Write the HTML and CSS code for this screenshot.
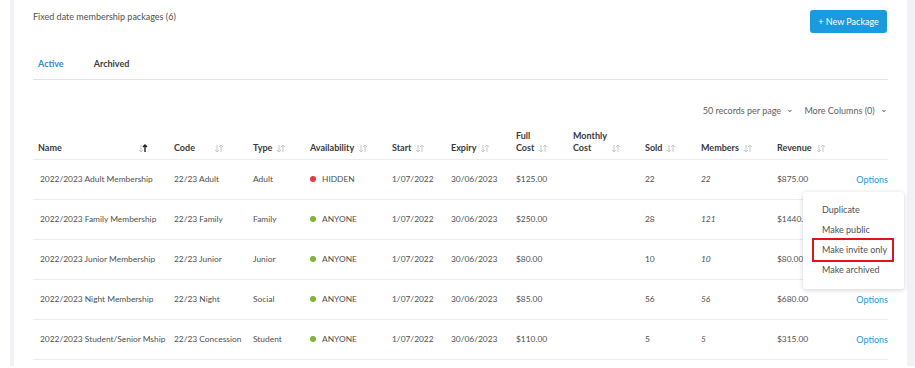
FILE: index.html
```html
<!DOCTYPE html>
<html lang="en">
<head>
<meta charset="UTF-8">
<meta name="viewport" content="width=device-width, initial-scale=1.0">
<title>Membership Packages</title>
<link rel="stylesheet" href="styles.css">
</head>
<body>
<div class="frame">
    <div class="card">
        <div class="top-bar">
            <h1 class="title">Fixed date membership packages (6)</h1>
            <button class="btn-new">+ New Package</button>
        </div>

        <div class="tabs">
            <span class="tab active">Active</span>
            <span class="tab">Archived</span>
        </div>

        <div class="table-tools">
            <span class="tool">50 records per page <span class="chev">&#8964;</span></span>
            <span class="tool">More Columns (0) <span class="chev">&#8964;</span></span>
        </div>

        <table class="packages">
            <colgroup>
                <col style="width:134px"><col style="width:79px"><col style="width:57px"><col style="width:82px">
                <col style="width:59px"><col style="width:65px"><col style="width:57px"><col style="width:72px">
                <col style="width:56px"><col style="width:76px"><col style="width:81px"><col style="width:37px">
            </colgroup>
            <thead>
                <tr>
                    <th><div class="th spread w-name">Name <svg class="sort" viewBox="0 0 10 9"><path d="M3 1v7M1 6l2 2 2-2" /><path class="on" d="M7 8V1M5 3l2-2 2 2" /></svg></div></th>
                    <th><div class="th spread w-code">Code <svg class="sort" viewBox="0 0 10 9"><path d="M3 1v7M1 6l2 2 2-2M7 8V1M5 3l2-2 2 2" /></svg></div></th>
                    <th><div class="th">Type <svg class="sort" viewBox="0 0 10 9"><path d="M3 1v7M1 6l2 2 2-2M7 8V1M5 3l2-2 2 2" /></svg></div></th>
                    <th><div class="th">Availability <svg class="sort" viewBox="0 0 10 9"><path d="M3 1v7M1 6l2 2 2-2M7 8V1M5 3l2-2 2 2" /></svg></div></th>
                    <th><div class="th">Start <svg class="sort" viewBox="0 0 10 9"><path d="M3 1v7M1 6l2 2 2-2M7 8V1M5 3l2-2 2 2" /></svg></div></th>
                    <th><div class="th">Expiry <svg class="sort" viewBox="0 0 10 9"><path d="M3 1v7M1 6l2 2 2-2M7 8V1M5 3l2-2 2 2" /></svg></div></th>
                    <th><div class="th">Full<br>Cost <svg class="sort" viewBox="0 0 10 9"><path d="M3 1v7M1 6l2 2 2-2M7 8V1M5 3l2-2 2 2" /></svg></div></th>
                    <th><div class="th spread w-monthly"><span>Monthly<br>Cost</span> <svg class="sort" viewBox="0 0 10 9"><path d="M3 1v7M1 6l2 2 2-2M7 8V1M5 3l2-2 2 2" /></svg></div></th>
                    <th><div class="th">Sold <svg class="sort" viewBox="0 0 10 9"><path d="M3 1v7M1 6l2 2 2-2M7 8V1M5 3l2-2 2 2" /></svg></div></th>
                    <th><div class="th">Members <svg class="sort" viewBox="0 0 10 9"><path d="M3 1v7M1 6l2 2 2-2M7 8V1M5 3l2-2 2 2" /></svg></div></th>
                    <th><div class="th">Revenue <svg class="sort" viewBox="0 0 10 9"><path d="M3 1v7M1 6l2 2 2-2M7 8V1M5 3l2-2 2 2" /></svg></div></th>
                    <th></th>
                </tr>
            </thead>
            <tbody>
                <tr>
                    <td>2022/2023 Adult Membership</td>
                    <td>22/23 Adult</td>
                    <td>Adult</td>
                    <td><span class="dot hidden"></span>HIDDEN</td>
                    <td>1/07/2022</td>
                    <td>30/06/2023</td>
                    <td>$125.00</td>
                    <td></td>
                    <td>22</td>
                    <td class="members">22</td>
                    <td>$875.00</td>
                    <td class="opt-cell">
                        <a class="options">Options</a>
                        <div class="menu">
                            <div class="menu-item">Duplicate</div>
                            <div class="menu-item">Make public</div>
                            <div class="menu-item marked">Make invite only</div>
                            <div class="menu-item">Make archived</div>
                        </div>
                    </td>
                </tr>
                <tr>
                    <td>2022/2023 Family Membership</td>
                    <td>22/23 Family</td>
                    <td>Family</td>
                    <td><span class="dot"></span>ANYONE</td>
                    <td>1/07/2022</td>
                    <td>30/06/2023</td>
                    <td>$250.00</td>
                    <td></td>
                    <td>28</td>
                    <td class="members">121</td>
                    <td>$1440.00</td>
                    <td class="opt-cell"><a class="options">Options</a></td>
                </tr>
                <tr>
                    <td>2022/2023 Junior Membership</td>
                    <td>22/23 Junior</td>
                    <td>Junior</td>
                    <td><span class="dot"></span>ANYONE</td>
                    <td>1/07/2022</td>
                    <td>30/06/2023</td>
                    <td>$80.00</td>
                    <td></td>
                    <td>10</td>
                    <td class="members">10</td>
                    <td>$80.00</td>
                    <td class="opt-cell"><a class="options">Options</a></td>
                </tr>
                <tr>
                    <td>2022/2023 Night Membership</td>
                    <td>22/23 Night</td>
                    <td>Social</td>
                    <td><span class="dot"></span>ANYONE</td>
                    <td>1/07/2022</td>
                    <td>30/06/2023</td>
                    <td>$85.00</td>
                    <td></td>
                    <td>56</td>
                    <td class="members">56</td>
                    <td>$680.00</td>
                    <td class="opt-cell"><a class="options">Options</a></td>
                </tr>
                <tr>
                    <td>2022/2023 Student/Senior Mship</td>
                    <td>22/23 Concession</td>
                    <td>Student</td>
                    <td><span class="dot"></span>ANYONE</td>
                    <td>1/07/2022</td>
                    <td>30/06/2023</td>
                    <td>$110.00</td>
                    <td></td>
                    <td>5</td>
                    <td class="members">5</td>
                    <td>$315.00</td>
                    <td class="opt-cell"><a class="options">Options</a></td>
                </tr>
            </tbody>
        </table>
    </div>
</div>
</body>
</html>
```

FILE: styles.css
```css
body {
    margin: 0;
    padding: 0 0 0 10px;
    font-family: Lato, "Open Sans", Arial, sans-serif;
    font-size: 9px;
    color: #505050;
    background: #fff;
}

.frame {
    background: #f1f2f6;
    padding: 0 8px 0 4px;
    height: 366px;
    overflow: hidden;
}

.card {
    background: #fff;
    height: 100%;
    padding: 0 19px;
}

.top-bar {
    display: flex;
    justify-content: space-between;
    align-items: flex-start;
    padding-top: 10px;
}

.title {
    margin: 1px 0 0;
    font-size: 9px;
    font-weight: normal;
    line-height: 12px;
    color: #505050;
}

.btn-new {
    margin-right: 1px;
    height: 23px;
    width: 77px;
    border: none;
    border-radius: 3px;
    background: #1a9be0;
    color: #fff;
    font-family: inherit;
    font-size: 9px;
    padding: 0;
    cursor: pointer;
}

.tabs {
    display: flex;
    gap: 30px;
    margin-top: 25px;
    padding: 0 5px 9px;
    border-bottom: 1px solid #e4e4e4;
}

.tab {
    font-weight: bold;
    color: #3c3c3c;
    line-height: 12px;
}

.tab.active {
    color: #2a8fd2;
}

.table-tools {
    display: flex;
    justify-content: flex-end;
    gap: 10px;
    margin-top: 25px;
    line-height: 12px;
    color: #606060;
}

.chev {
    font-size: 9px;
    margin-left: 3px;
    position: relative;
    top: -2px;
}

.packages {
    margin-top: 13px;
    width: 855px;
    border-collapse: collapse;
    table-layout: fixed;
}

.packages th {
    text-align: left;
    vertical-align: bottom;
    padding: 0 0 5px 7px;
    font-weight: bold;
    color: #3a3a3a;
    line-height: 12px;
    border-bottom: 1px solid #ececec;
}

.packages th:first-child {
    padding-left: 5px;
}

.th {
    display: flex;
    align-items: flex-end;
    gap: 4px;
}

.th.spread {
    justify-content: space-between;
}

.w-name { width: 110px; }
.w-code { width: 50px; }
.w-monthly { width: 47px; }

.sort {
    width: 10px;
    height: 9px;
    flex-shrink: 0;
    margin-bottom: 1px;
    fill: none;
    stroke: #c6c6c6;
    stroke-width: 1;
}

.sort .on {
    stroke: #222;
    stroke-width: 1.4;
}

.packages td {
    height: 38px;
    padding: 0 0 1px 7px;
    border-bottom: 1px solid #ececec;
    white-space: nowrap;
    overflow: visible;
    font-size: 8.4px;
    color: #505050;
}

.packages td.members {
    font-style: italic;
}

.dot {
    display: inline-block;
    width: 6px;
    height: 6px;
    border-radius: 50%;
    background: #7cb82f;
    margin-right: 6px;
    vertical-align: 0;
}

.dot.hidden {
    background: #e8383d;
}

.opt-cell {
    position: relative;
    text-align: right;
}

.packages td.opt-cell {
    padding: 0 0 1px;
    font-size: 9px;
}

.options {
    color: #1c9ad6;
    cursor: pointer;
}

.menu {
    position: absolute;
    top: 32px;
    right: -16px;
    width: 101px;
    padding: 8px 0 9px;
    background: #fff;
    border-radius: 3px;
    box-shadow: 0 1px 5px rgba(0, 0, 0, 0.18);
    text-align: left;
    z-index: 2;
}

.menu-item {
    line-height: 20px;
    padding: 0 19px;
    color: #505050;
}

.menu-item.marked {
    outline: 2px solid #e3121b;
    margin: 0 12px 0 11px;
    padding: 0 0 0 8px;
}
```
